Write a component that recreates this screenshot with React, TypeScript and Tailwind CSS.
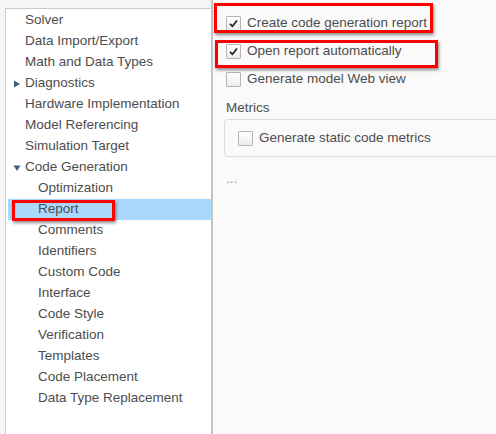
import React from "react";

type Item = { label: string; level: 0 | 1; arrow?: "right" | "down"; selected?: boolean };

const items: Item[] = [
  { label: "Solver", level: 0 },
  { label: "Data Import/Export", level: 0 },
  { label: "Math and Data Types", level: 0 },
  { label: "Diagnostics", level: 0, arrow: "right" },
  { label: "Hardware Implementation", level: 0 },
  { label: "Model Referencing", level: 0 },
  { label: "Simulation Target", level: 0 },
  { label: "Code Generation", level: 0, arrow: "down" },
  { label: "Optimization", level: 1 },
  { label: "Report", level: 1, selected: true },
  { label: "Comments", level: 1 },
  { label: "Identifiers", level: 1 },
  { label: "Custom Code", level: 1 },
  { label: "Interface", level: 1 },
  { label: "Code Style", level: 1 },
  { label: "Verification", level: 1 },
  { label: "Templates", level: 1 },
  { label: "Code Placement", level: 1 },
  { label: "Data Type Replacement", level: 1 },
];

function Arrow({ dir }: { dir: "right" | "down" }) {
  return (
    <svg width="8" height="8" viewBox="0 0 8 8" className="absolute left-[5px] top-[7px]">
      {dir === "right" ? (
        <polygon points="1,0.5 7,4 1,7.5" fill="#3f5d7d" />
      ) : (
        <polygon points="0.5,1.5 7.5,1.5 4,7" fill="#3f5d7d" />
      )}
    </svg>
  );
}

function Check({ checked }: { checked?: boolean }) {
  return (
    <span className="w-[15px] h-[15px] shrink-0 border border-[#b5b5b5] bg-gradient-to-b from-white to-[#ececec] rounded-[1px] flex items-center justify-center">
      {checked && (
        <svg width="11" height="11" viewBox="0 0 11 11">
          <path d="M2 5.8 L4.4 8.3 L9 2.4" fill="none" stroke="#222" strokeWidth="1.7" />
        </svg>
      )}
    </span>
  );
}

function RedBox({ className }: { className: string }) {
  return (
    <div
      className={`absolute border-[3px] border-[#f00] shadow-[1px_2px_3px_rgba(0,0,0,0.45)] pointer-events-none ${className}`}
    />
  );
}

export default function App() {
  return (
    <div
      className="w-[496px] h-[434px] bg-[#f6f6f6] flex overflow-hidden text-[13.5px] text-[#4d4d4d] whitespace-nowrap"
      style={{ fontFamily: '"Liberation Sans", Arial, sans-serif' }}
    >
      <div className="w-[206px] shrink-0 ml-[5px] mt-[8px] bg-white border-l border-t border-[#cacaca] pt-[1px] pl-[2px]">
        {items.map((it) => (
          <div
            key={it.label}
            className={`relative h-[21px] flex items-center ${it.selected ? "bg-[#a8d9fc]" : ""}`}
          >
            {it.arrow && <Arrow dir={it.arrow} />}
            <span className={it.level === 0 ? "pl-[17px]" : "pl-[30px]"}>{it.label}</span>
            {it.selected && <RedBox className="left-[4px] top-[1px] w-[103px] h-[21px]" />}
          </div>
        ))}
      </div>
      <div className="flex-1 bg-[#fafafa] border-l-2 border-[#c4c4c4] relative pl-[13px] pt-[9px]">
        <div className="relative flex items-center gap-[6px] h-[28px]">
          <Check checked />
          <span>Create code generation report</span>
          <RedBox className="left-[-12px] top-[-6px] w-[219px] h-[30px]" />
        </div>
        <div className="relative flex items-center gap-[6px] h-[28px]">
          <Check checked />
          <span>Open report automatically</span>
          <RedBox className="left-[-11px] top-[3px] w-[223px] h-[28px]" />
        </div>
        <div className="flex items-center gap-[6px] h-[28px]">
          <Check />
          <span>Generate model Web view</span>
        </div>
        <div className="mt-[6px] h-[18px] flex items-center">Metrics</div>
        <div className="mt-[2px] -ml-[2px] w-[300px] h-[38px] border border-[#dcdcdc] rounded-[4px] flex items-center gap-[6px] pl-[13px]">
          <Check />
          <span>Generate static code metrics</span>
        </div>
        <div className="mt-[15px] text-[#8a8a8a] leading-none">...</div>
      </div>
    </div>
  );
}
